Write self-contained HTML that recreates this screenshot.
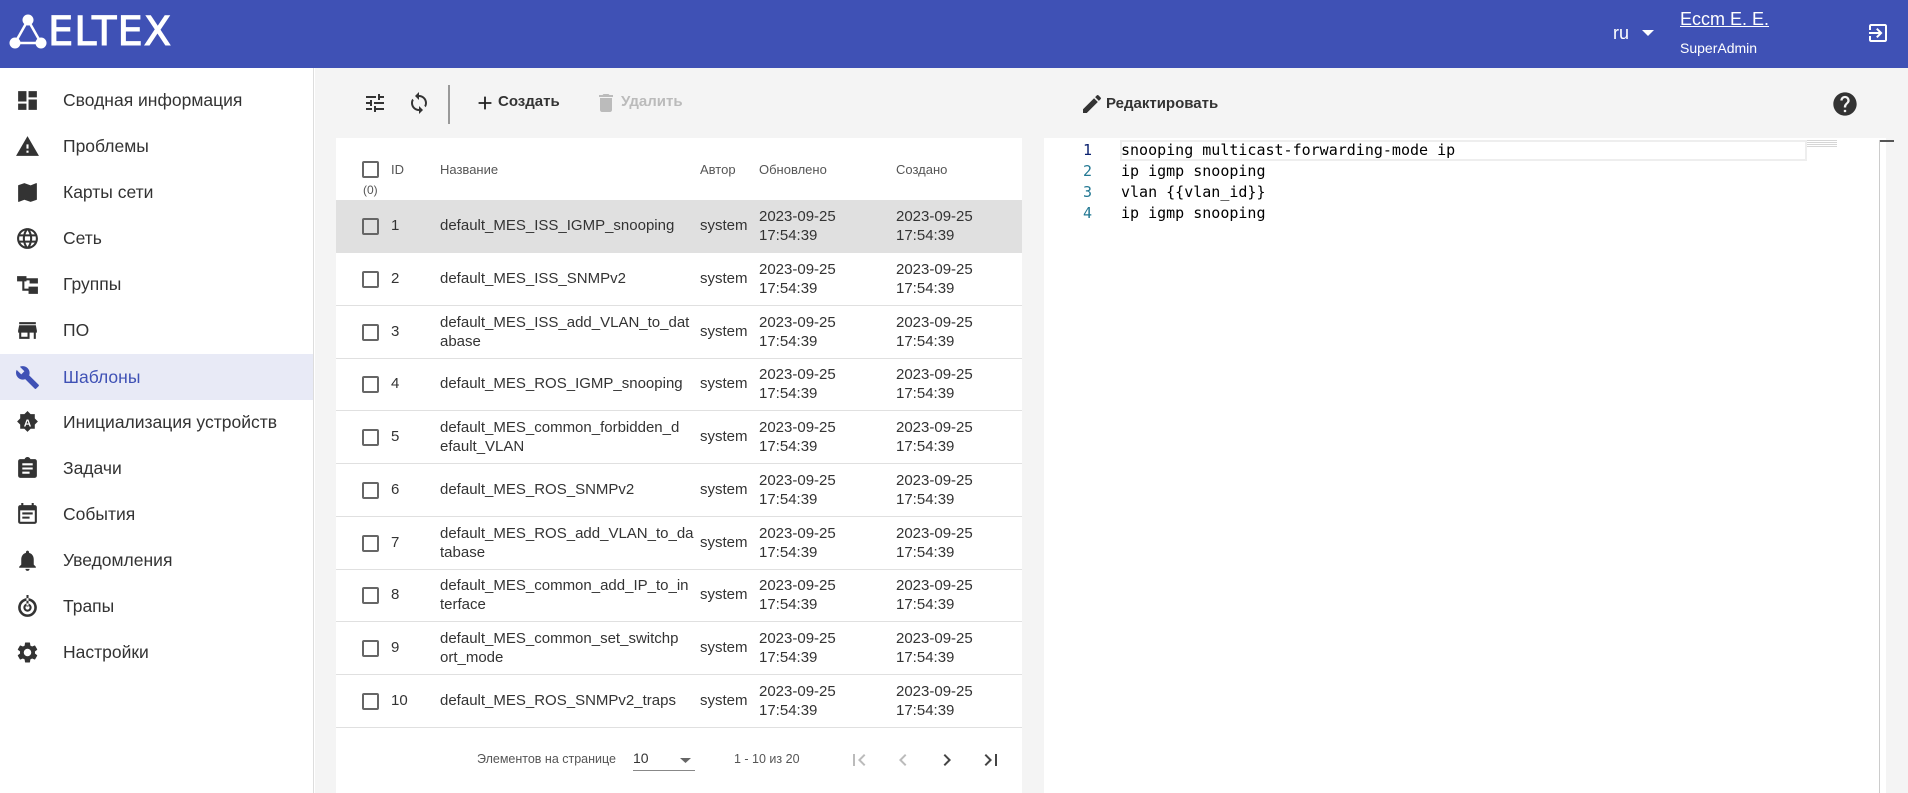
<!DOCTYPE html>
<html><head><meta charset="utf-8"><style>
*{box-sizing:border-box;margin:0;padding:0}
body{width:1908px;height:793px;overflow:hidden;font-family:"Liberation Sans",Arial,sans-serif;color:#333;background:#fff;position:relative}
.a{position:absolute}
#hdr{left:0;top:0;width:1908px;height:68px;background:#3f51b5;color:#fff}
#side{left:0;top:68px;width:314px;height:725px;border-right:1px solid #ddd;background:#fff}
.it{position:absolute;left:0;width:313px;height:46px;display:flex;align-items:center;font-size:17.5px;color:#333}
.it svg{position:absolute;left:15px;width:25px;height:25px;fill:#333}
.it span{position:absolute;left:63px}
.it.act{background:#e8eaf6;color:#3f51b5}
.it.act svg{fill:#3f51b5}
#mid{left:315px;top:68px;width:729px;height:725px;background:#f4f4f4}
#tb{left:336px;top:68px;width:686px;height:70px}
#tbl{left:336px;top:138px;width:686px;height:655px;background:#fff}
.hd{position:absolute;font-size:13px;color:#555}
.row{position:absolute;left:336px;width:686px;height:53px;border-bottom:1px solid #e0e0e0;font-size:15px;color:#333}
.row div{position:absolute}
.cb{width:17px;height:17px;border:2px solid #666;border-radius:2px}
.c2{line-height:19px}
#right{left:1044px;top:68px;width:842px;height:725px;background:#fff}
#rtb{left:1044px;top:68px;width:842px;height:70px;background:#f4f4f4}
#scr{left:1886px;top:68px;width:22px;height:725px;background:#f4f4f4}
.code{position:absolute;font-family:"DejaVu Sans Mono","Liberation Mono",monospace;font-size:15px;line-height:21px;color:#000}
.ln{position:absolute;font-family:"DejaVu Sans Mono",monospace;font-size:15px;line-height:21px;color:#237893;width:40px;text-align:right}
</style></head><body>
<div id="hdr" class="a">
 <svg class="a" style="left:8px;top:14px" width="40" height="36" viewBox="0 0 40 36"><g fill="#fff" stroke="#fff" stroke-width="2.5"><line x1="20" y1="6" x2="7" y2="29"/><line x1="20" y1="6" x2="33" y2="29"/><line x1="7" y1="29" x2="33" y2="29"/></g><circle cx="20" cy="6" r="5.5" fill="#fff"/><circle cx="7" cy="29" r="5.5" fill="#fff"/><circle cx="33" cy="29" r="5.5" fill="#fff"/></svg>
 <div class="a" style="left:48px;top:9px;font-size:40px;letter-spacing:1px;font-family:'DejaVu Sans','Liberation Sans',sans-serif;-webkit-text-stroke:1px #fff">ELTEX</div>
 <div class="a" style="left:1613px;top:23px;font-size:18px">ru</div>
 <svg class="a" style="left:1642px;top:30px" width="12" height="6"><path d="M0 0h12L6 6z" fill="#fff"/></svg>
 <div class="a" style="left:1680px;top:9px;font-size:18px;text-decoration:underline">Eccm E. E.</div>
 <div class="a" style="left:1680px;top:40px;font-size:14px">SuperAdmin</div>
 <svg class="a" style="left:1866px;top:21px" width="24" height="24" viewBox="0 0 24 24"><path fill="#fff" d="M10.09 15.59L11.5 17l5-5-5-5-1.41 1.41L12.67 11H3v2h9.670l-2.58 2.59zM19 3H5c-1.11 0-2 .9-2 2v4h2V5h14v14H5v-4H3v4c0 1.1.89 2 2 2h14c1.1 0 2-.9 2-2V5c0-1.1-.9-2-2-2z"/></svg>
</div>
<div id="side" class="a">
 <div class="it" style="top:9px"><svg viewBox="0 0 24 24"><path d="M3 13h8V3H3v10zm0 8h8v-6H3v6zm10 0h8V11h-8v10zm0-18v6h8V3h-8z"/></svg><span>Сводная информация</span></div>
 <div class="it" style="top:55px"><svg viewBox="0 0 24 24"><path d="M1 21h22L12 2 1 21zm12-3h-2v-2h2v2zm0-4h-2v-4h2v4z"/></svg><span>Проблемы</span></div>
 <div class="it" style="top:101px"><svg viewBox="0 0 24 24"><path d="M20.5 3l-.16.03L15 5.1 9 3 3.36 4.9c-.21.07-.36.25-.36.48V20.5c0 .28.22.5.5.5l.16-.03L9 18.9l6 2.1 5.640-1.9c.21-.07.36-.25.36-.48V3.5c0-.28-.22-.5-.5-.5z"/></svg><span>Карты сети</span></div>
 <div class="it" style="top:147px"><svg viewBox="0 0 24 24"><path d="M12 2C6.48 2 2 6.48 2 12s4.48 10 10 10 10-4.48 10-10S17.52 2 12 2zm6.93 6h-2.95a15.65 15.65 0 00-1.38-3.56A8.03 8.03 0 0118.93 8zM12 4.04c.83 1.2 1.48 2.53 1.91 3.96h-3.82c.43-1.43 1.08-2.76 1.91-3.960zM4.26 14C4.1 13.36 4 12.69 4 12s.1-1.36.26-2h3.38c-.08.66-.14 1.32-.14 2s.06 1.34.14 2H4.26zm.82 2h2.95c.32 1.25.78 2.450 1.38 3.56A7.99 7.99 0 015.08 16zm2.95-8H5.08a7.99 7.99 0 014.33-3.56C8.81 5.55 8.35 6.75 8.03 8zM12 19.96c-.83-1.2-1.48-2.53-1.91-3.96h3.82c-.43 1.43-1.08 2.76-1.91 3.96zM14.34 14H9.66c-.09-.66-.16-1.32-.16-2s.07-1.35.16-2h4.68c.09.65.16 1.32.16 2s-.07 1.34-.16 2zm.25 5.56c.6-1.11 1.06-2.31 1.38-3.56h2.95a8.03 8.03 0 01-4.33 3.56zM16.36 14c.08-.66.14-1.32.14-2s-.06-1.34-.14-2h3.38c.16.64.26 1.31.26 2s-.1 1.36-.26 2h-3.38z"/></svg><span>Сеть</span></div>
 <div class="it" style="top:193px"><svg viewBox="0 0 24 24"><path d="M2 4h9v5H2zM7 9h2v7h4v-2h9v7h-9v-3H7z M14 6h8v5h-8z M9 6h5v2H9z"/></svg><span>Группы</span></div>
 <div class="it" style="top:239px"><svg viewBox="0 0 24 24"><path d="M4 4h16v2H4zm16 3H4l-1 5v2h1v6h10v-6h4v6h2v-6h1v-2l-1-5zm-8 11H6v-4h6v4z"/></svg><span>ПО</span></div>
 <div class="it act" style="top:286px"><svg viewBox="0 0 24 24"><path d="M22.7 19l-9.1-9.1c.9-2.3.4-5-1.5-6.9-2-2-5-2.4-7.4-1.3L9 6 6 9 1.6 4.7C.4 7.1.9 10.1 2.9 12.1c1.9 1.9 4.6 2.4 6.9 1.5l9.1 9.1c.4.4 1 .4 1.4 0l2.3-2.3c.5-.4.5-1.1.1-1.4z"/></svg><span>Шаблоны</span></div>
 <div class="it" style="top:331px"><svg viewBox="0 0 24 24"><path d="M12 1l3 3h4v4l3 3-3 3v4h-4l-3 3-3-3H5v-4l-3-3 3-3V4h4z"/><text x="12" y="16" font-size="10" font-weight="bold" text-anchor="middle" fill="#fff" font-family="Liberation Sans">A</text></svg><span>Инициализация устройств</span></div>
 <div class="it" style="top:377px"><svg viewBox="0 0 24 24"><path d="M19 3h-4.18C14.4 1.84 13.3 1 12 1s-2.4.84-2.82 2H5c-1.1 0-2 .9-2 2v14c0 1.1.9 2 2 2h14c1.1 0 2-.9 2-2V5c0-1.1-.9-2-2-2zM14 17H7v-2h7v2zm3-4H7v-2h10v2zm0-4H7V7h10v2z"/></svg><span>Задачи</span></div>
 <div class="it" style="top:423px"><svg viewBox="0 0 24 24"><path d="M19 3h-1V1h-2v2H8V1H6v2H5c-1.11 0-2 .9-2 2v14c0 1.1.89 2 2 2h14c1.1 0 2-.9 2-2V5c0-1.1-.9-2-2-2zm0 16H5V8h14v11zM7 10h10v2H7zm0 4h7v2H7z"/></svg><span>События</span></div>
 <div class="it" style="top:469px"><svg viewBox="0 0 24 24"><path d="M12 22c1.1 0 2-.9 2-2h-4c0 1.1.89 2 2 2zm6-6v-5c0-3.07-1.64-5.64-4.5-6.32V4c0-.83-.67-1.5-1.5-1.5s-1.5.67-1.5 1.5v.68C7.63 5.36 6 7.92 6 11v5l-2 2v1h16v-1l-2-2z"/></svg><span>Уведомления</span></div>
 <div class="it" style="top:515px"><svg viewBox="0 0 24 24"><path d="M12 4a9 9 0 100 18 9 9 0 000-18zm0 15.5a6.5 6.5 0 110-13 6.5 6.5 0 010 13zm0-10.5a4 4 0 100 8 4 4 0 000-8zm0 6a2 2 0 110-4 2 2 0 010 4zM11 1h2v11h-2z"/></svg><span>Трапы</span></div>
 <div class="it" style="top:561px"><svg viewBox="0 0 24 24"><path d="M19.14 12.94c.04-.3.06-.61.06-.94 0-.32-.02-.64-.07-.94l2.03-1.58a.49.49 0 00.12-.61l-1.92-3.32a.49.49 0 00-.59-.22l-2.39.96c-.5-.38-1.03-.7-1.62-.94l-.36-2.54a.48.48 0 00-.48-.41h-3.84c-.24 0-.43.17-.47.41l-.36 2.54c-.59.24-1.13.57-1.62.94l-2.39-.96a.48.48 0 00-.59.22L2.74 8.87c-.12.21-.08.47.12.61l2.03 1.58c-.05.3-.09.63-.09.94s.02.64.07.94l-2.03 1.58a.49.49 0 00-.12.61l1.92 3.32c.12.22.37.29.59.22l2.39-.96c.5.38 1.03.7 1.62.94l.36 2.54c.05.24.24.41.48.41h3.84c.24 0 .44-.17.47-.41l.36-2.54c.59-.24 1.13-.56 1.62-.94l2.39.96c.22.08.47 0 .59-.22l1.92-3.32c.12-.22.07-.47-.12-.61l-2.01-1.58zM12 15.6a3.6 3.6 0 110-7.2 3.6 3.6 0 010 7.2z"/></svg><span>Настройки</span></div>
</div>
<div id="mid" class="a"></div>
<div id="tb" class="a">
 <svg class="a" style="left:27px;top:23px" width="24" height="24" viewBox="0 0 24 24"><path fill="#333" d="M3 17v2h6v-2H3zM3 5v2h10V5H3zm10 16v-2h8v-2h-8v-2h-2v6h2zM7 9v2H3v2h4v2h2V9H7zm14 4v-2H11v2h10zm-6-4h2V7h4V5h-4V3h-2v6z"/></svg>
 <svg class="a" style="left:71px;top:23px" width="24" height="24" viewBox="0 0 24 24"><path fill="#333" d="M12 4V1L8 5l4 4V6c3.31 0 6 2.69 6 6 0 1.01-.25 1.97-.7 2.8l1.46 1.46A7.93 7.93 0 0020 12c0-4.42-3.58-8-8-8zm0 14c-3.31 0-6-2.69-6-6 0-1.01.25-1.97.7-2.8L5.24 7.74A7.93 7.93 0 004 12c0 4.42 3.58 8 8 8v3l4-4-4-4v3z"/></svg>
 <div class="a" style="left:112px;top:17px;width:2px;height:39px;background:#999"></div>
 <svg class="a" style="left:138px;top:24px" width="22" height="22" viewBox="0 0 24 24"><path fill="#222" d="M19 13h-6v6h-2v-6H5v-2h6V5h2v6h6v2z"/></svg>
 <div class="a" style="left:162px;top:25px;font-size:15px;font-weight:bold;color:#333">Создать</div>
 <svg class="a" style="left:258px;top:23px" width="24" height="24" viewBox="0 0 24 24"><path fill="#bbb" d="M6 19c0 1.1.9 2 2 2h8c1.1 0 2-.9 2-2V7H6v12zM19 4h-3.5l-1-1h-5l-1 1H5v2h14V4z"/></svg>
 <div class="a" style="left:285px;top:25px;font-size:15px;font-weight:bold;color:#bbb">Удалить</div>
</div>
<div id="tbl" class="a"></div>
<div class="a cb" style="left:362px;top:161px"></div>
<div class="hd" style="left:391px;top:162px">ID</div>
<div class="hd" style="left:363px;top:183px;font-size:12px">(0)</div>
<div class="hd" style="left:440px;top:162px">Название</div>
<div class="hd" style="left:700px;top:162px">Автор</div>
<div class="hd" style="left:759px;top:162px">Обновлено</div>
<div class="hd" style="left:896px;top:162px">Создано</div>

<div class="row" style="top:200px;background:#e0e0e0"><div class="cb" style="left:26px;top:18px"></div><div style="left:55px;top:17px">1</div><div style="left:104px;top:17px">default_MES_ISS_IGMP_snooping</div><div style="left:364px;top:17px">system</div><div class="c2" style="left:423px;top:7px">2023-09-25<br>17:54:39</div><div class="c2" style="left:560px;top:7px">2023-09-25<br>17:54:39</div></div>
<div class="row" style="top:253px"><div class="cb" style="left:26px;top:18px"></div><div style="left:55px;top:17px">2</div><div style="left:104px;top:17px">default_MES_ISS_SNMPv2</div><div style="left:364px;top:17px">system</div><div class="c2" style="left:423px;top:7px">2023-09-25<br>17:54:39</div><div class="c2" style="left:560px;top:7px">2023-09-25<br>17:54:39</div></div>
<div class="row" style="top:306px"><div class="cb" style="left:26px;top:18px"></div><div style="left:55px;top:17px">3</div><div class="c2" style="left:104px;top:7px">default_MES_ISS_add_VLAN_to_dat<br>abase</div><div style="left:364px;top:17px">system</div><div class="c2" style="left:423px;top:7px">2023-09-25<br>17:54:39</div><div class="c2" style="left:560px;top:7px">2023-09-25<br>17:54:39</div></div>
<div class="row" style="top:358px"><div class="cb" style="left:26px;top:18px"></div><div style="left:55px;top:17px">4</div><div style="left:104px;top:17px">default_MES_ROS_IGMP_snooping</div><div style="left:364px;top:17px">system</div><div class="c2" style="left:423px;top:7px">2023-09-25<br>17:54:39</div><div class="c2" style="left:560px;top:7px">2023-09-25<br>17:54:39</div></div>
<div class="row" style="top:411px"><div class="cb" style="left:26px;top:18px"></div><div style="left:55px;top:17px">5</div><div class="c2" style="left:104px;top:7px">default_MES_common_forbidden_d<br>efault_VLAN</div><div style="left:364px;top:17px">system</div><div class="c2" style="left:423px;top:7px">2023-09-25<br>17:54:39</div><div class="c2" style="left:560px;top:7px">2023-09-25<br>17:54:39</div></div>
<div class="row" style="top:464px"><div class="cb" style="left:26px;top:18px"></div><div style="left:55px;top:17px">6</div><div style="left:104px;top:17px">default_MES_ROS_SNMPv2</div><div style="left:364px;top:17px">system</div><div class="c2" style="left:423px;top:7px">2023-09-25<br>17:54:39</div><div class="c2" style="left:560px;top:7px">2023-09-25<br>17:54:39</div></div>
<div class="row" style="top:517px"><div class="cb" style="left:26px;top:18px"></div><div style="left:55px;top:17px">7</div><div class="c2" style="left:104px;top:7px">default_MES_ROS_add_VLAN_to_da<br>tabase</div><div style="left:364px;top:17px">system</div><div class="c2" style="left:423px;top:7px">2023-09-25<br>17:54:39</div><div class="c2" style="left:560px;top:7px">2023-09-25<br>17:54:39</div></div>
<div class="row" style="top:569px"><div class="cb" style="left:26px;top:18px"></div><div style="left:55px;top:17px">8</div><div class="c2" style="left:104px;top:7px">default_MES_common_add_IP_to_in<br>terface</div><div style="left:364px;top:17px">system</div><div class="c2" style="left:423px;top:7px">2023-09-25<br>17:54:39</div><div class="c2" style="left:560px;top:7px">2023-09-25<br>17:54:39</div></div>
<div class="row" style="top:622px"><div class="cb" style="left:26px;top:18px"></div><div style="left:55px;top:17px">9</div><div class="c2" style="left:104px;top:7px">default_MES_common_set_switchp<br>ort_mode</div><div style="left:364px;top:17px">system</div><div class="c2" style="left:423px;top:7px">2023-09-25<br>17:54:39</div><div class="c2" style="left:560px;top:7px">2023-09-25<br>17:54:39</div></div>
<div class="row" style="top:675px"><div class="cb" style="left:26px;top:18px"></div><div style="left:55px;top:17px">10</div><div style="left:104px;top:17px">default_MES_ROS_SNMPv2_traps</div><div style="left:364px;top:17px">system</div><div class="c2" style="left:423px;top:7px">2023-09-25<br>17:54:39</div><div class="c2" style="left:560px;top:7px">2023-09-25<br>17:54:39</div></div>

<div class="a" style="left:477px;top:752px;font-size:12.5px;color:#555">Элементов на странице</div>
<div class="a" style="left:633px;top:750px;font-size:14px;color:#333">10</div>
<svg class="a" style="left:680px;top:758px" width="11" height="5"><path d="M0 0h11L5.5 5z" fill="#666"/></svg>
<div class="a" style="left:633px;top:770px;width:62px;height:1px;background:#888"></div>
<div class="a" style="left:734px;top:752px;font-size:12.5px;color:#555">1 - 10 из 20</div>
<svg class="a" style="left:847px;top:748px" width="24" height="24" viewBox="0 0 24 24"><path fill="#bbb" d="M18.41 16.59L13.82 12l4.59-4.59L17 6l-6 6 6 6zM6 6h2v12H6z"/></svg>
<svg class="a" style="left:891px;top:748px" width="24" height="24" viewBox="0 0 24 24"><path fill="#bbb" d="M15.41 7.41L14 6l-6 6 6 6 1.41-1.41L10.83 12z"/></svg>
<svg class="a" style="left:935px;top:748px" width="24" height="24" viewBox="0 0 24 24"><path fill="#444" d="M10 6L8.59 7.41 13.17 12l-4.58 4.59L10 18l6-6z"/></svg>
<svg class="a" style="left:979px;top:748px" width="24" height="24" viewBox="0 0 24 24"><path fill="#444" d="M5.59 7.41L10.18 12l-4.59 4.59L7 18l6-6-6-6zM16 6h2v12h-2z"/></svg>

<div id="right" class="a"></div>
<div id="rtb" class="a"></div>
<div id="scr" class="a"></div>
<svg class="a" style="left:1080px;top:92px" width="24" height="24" viewBox="0 0 24 24"><path fill="#333" d="M3 17.25V21h3.75L17.81 9.94l-3.75-3.75L3 17.25zM20.71 7.04a1 1 0 000-1.41l-2.34-2.34a1 1 0 00-1.41 0l-1.83 1.83 3.75 3.75 1.83-1.83z"/></svg>
<div class="a" style="left:1106px;top:95px;font-size:15px;font-weight:bold;color:#333">Редактировать</div>
<svg class="a" style="left:1831px;top:90px" width="28" height="28" viewBox="0 0 24 24"><path fill="#333" d="M12 2C6.48 2 2 6.48 2 12s4.48 10 10 10 10-4.48 10-10S17.52 2 12 2zm1 17h-2v-2h2v2zm2.07-7.75l-.9.92C13.45 12.9 13 13.5 13 15h-2v-.5c0-1.1.45-2.1 1.17-2.83l1.24-1.26c.37-.36.59-.86.59-1.41 0-1.1-.9-2-2-2s-2 .9-2 2H8c0-2.210 1.79-4 4-4s4 1.79 4 4c0 .88-.36 1.68-.93 2.25z"/></svg>
<div class="a" style="left:1120px;top:140px;width:687px;height:21px;border:2px solid #eee"></div>
<div class="ln" style="left:1052px;top:140px;color:#0b216f">1</div>
<div class="ln" style="left:1052px;top:161px">2</div>
<div class="ln" style="left:1052px;top:182px">3</div>
<div class="ln" style="left:1052px;top:203px">4</div>
<div class="code" style="left:1121px;top:140px">snooping multicast-forwarding-mode ip</div>
<div class="code" style="left:1121px;top:161px">ip igmp snooping</div>
<div class="code" style="left:1121px;top:182px">vlan {{vlan_id}}</div>
<div class="code" style="left:1121px;top:203px">ip igmp snooping</div>
<div class="a" style="left:1807px;top:140px;width:30px;height:8px;background:repeating-linear-gradient(#bbb 0 1px,transparent 1px 2px);opacity:.6"></div>
<div class="a" style="left:1879px;top:140px;width:1px;height:653px;background:#ccc"></div>
<div class="a" style="left:1880px;top:140px;width:14px;height:2px;background:#555"></div>
</body></html>
